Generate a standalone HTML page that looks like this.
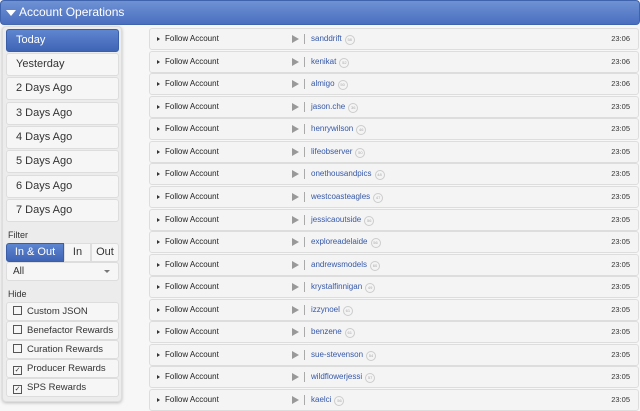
<!DOCTYPE html><html><head><style>
body{margin:0;width:640px;height:405px;overflow:hidden;background:#f7f7f7;font-family:"Liberation Sans",sans-serif;position:relative}
.hd{position:absolute;left:0;top:0;width:638px;height:23px;background:linear-gradient(#6f92d4,#4a6fbf);border:1px solid #3f63ad;border-radius:4px;color:#fff;font-size:12px;line-height:23px}
.hd span{margin-left:18px}
.hd i{position:absolute;left:5px;top:9px;border-left:5px solid transparent;border-right:5px solid transparent;border-top:6px solid #fff}
.lp{position:absolute;left:2px;top:26px;width:118px;height:374px;background:#ececec;border:1px solid #ddd;border-radius:4px;box-shadow:0 1px 3px #bbb}
.b{position:absolute;left:3px;width:111px;height:21px;background:#f6f6f6;border:1px solid #ddd;border-radius:3px;font-size:11px;line-height:21px;color:#333;box-sizing:content-box;text-indent:9px;white-space:nowrap;overflow:hidden}
.b.a{background:linear-gradient(#5f86d0,#3f64b5);border-color:#3a5fa8;color:#fff}
.lb{position:absolute;left:5px;font-size:9px;color:#333}
.c{text-indent:0;padding-left:0;font-size:9.5px}
.c u{display:inline-block;width:7px;height:7px;border:1px solid #555;margin:0 5px 0 6px;vertical-align:-1px;text-decoration:none;font-size:7px;line-height:7px;text-align:center}
.r{position:absolute;left:149px;width:488px;height:20px;background:#f4f4f4;border:1px solid #ddd;border-radius:3px;font-size:8px;color:#222;line-height:20px}
.r .t{position:absolute;left:7px;top:8px;border-top:2.5px solid transparent;border-bottom:2.5px solid transparent;border-left:3px solid #333}
.r .f{position:absolute;left:15px}
.r .p{position:absolute;left:142px;top:6px;border-top:4px solid transparent;border-bottom:4px solid transparent;border-left:7px solid #999}
.r .s{position:absolute;left:154px;top:5px;width:1px;height:10px;background:#aaa}
.r .n{position:absolute;left:161px;color:#3558a8}
.r .n em{font-style:normal;display:inline-block;width:8px;height:8px;border:1px solid #ccc;border-radius:50%;font-size:4px;line-height:8px;text-align:center;color:#aaa;margin-left:3px;vertical-align:0}
.r .tm{position:absolute;right:8px;font-size:7.5px;color:#333}
</style></head><body>
<div class="hd"><i></i><span>Account Operations</span></div>
<div class="lp">
<div class="b a" style="top:2px">Today</div>
<div class="b" style="top:26px">Yesterday</div>
<div class="b" style="top:50px">2 Days Ago</div>
<div class="b" style="top:75px">3 Days Ago</div>
<div class="b" style="top:99px">4 Days Ago</div>
<div class="b" style="top:123px">5 Days Ago</div>
<div class="b" style="top:148px">6 Days Ago</div>
<div class="b" style="top:172px">7 Days Ago</div>
<div class="lb" style="top:203px">Filter</div>
<div class="b a" style="top:216px;width:56px;height:17px;line-height:17px;text-indent:0;text-align:center;border-radius:3px 0 0 3px">In &amp; Out</div>
<div class="b" style="top:216px;left:61px;width:25px;height:17px;line-height:17px;text-indent:0;text-align:center;border-radius:0">In</div>
<div class="b" style="top:216px;left:88px;width:26px;height:17px;line-height:17px;text-indent:0;text-align:center;border-radius:0 3px 3px 0">Out</div>
<div class="b" style="top:235px;height:17px;line-height:17px;text-indent:6px;font-size:10px">All<span style="position:absolute;right:8px;top:7px;border-left:3px solid transparent;border-right:3px solid transparent;border-top:3px solid #777"></span></div>
<div class="lb" style="top:262px">Hide</div>
<div class="b c" style="top:275px;height:17px;line-height:17px"><u></u>Custom JSON</div>
<div class="b c" style="top:294px;height:17px;line-height:17px"><u></u>Benefactor Rewards</div>
<div class="b c" style="top:313px;height:17px;line-height:17px"><u></u>Curation Rewards</div>
<div class="b c" style="top:332px;height:17px;line-height:17px"><u>✓</u>Producer Rewards</div>
<div class="b c" style="top:351px;height:17px;line-height:17px"><u>✓</u>SPS Rewards</div>
</div>
<div class="r" style="top:28px"><i class="t"></i><span class="f">Follow Account</span><i class="p"></i><i class="s"></i><span class="n">sanddrift<em>58</em></span><span class="tm">23:06</span></div>
<div class="r" style="top:51px"><i class="t"></i><span class="f">Follow Account</span><i class="p"></i><i class="s"></i><span class="n">kenikat<em>52</em></span><span class="tm">23:06</span></div>
<div class="r" style="top:73px"><i class="t"></i><span class="f">Follow Account</span><i class="p"></i><i class="s"></i><span class="n">almigo<em>50</em></span><span class="tm">23:06</span></div>
<div class="r" style="top:96px"><i class="t"></i><span class="f">Follow Account</span><i class="p"></i><i class="s"></i><span class="n">jason.che<em>36</em></span><span class="tm">23:05</span></div>
<div class="r" style="top:118px"><i class="t"></i><span class="f">Follow Account</span><i class="p"></i><i class="s"></i><span class="n">henrywilson<em>46</em></span><span class="tm">23:05</span></div>
<div class="r" style="top:141px"><i class="t"></i><span class="f">Follow Account</span><i class="p"></i><i class="s"></i><span class="n">lifeobserver<em>50</em></span><span class="tm">23:05</span></div>
<div class="r" style="top:163px"><i class="t"></i><span class="f">Follow Account</span><i class="p"></i><i class="s"></i><span class="n">onethousandpics<em>48</em></span><span class="tm">23:05</span></div>
<div class="r" style="top:186px"><i class="t"></i><span class="f">Follow Account</span><i class="p"></i><i class="s"></i><span class="n">westcoasteagles<em>47</em></span><span class="tm">23:05</span></div>
<div class="r" style="top:209px"><i class="t"></i><span class="f">Follow Account</span><i class="p"></i><i class="s"></i><span class="n">jessicaoutside<em>56</em></span><span class="tm">23:05</span></div>
<div class="r" style="top:231px"><i class="t"></i><span class="f">Follow Account</span><i class="p"></i><i class="s"></i><span class="n">exploreadelaide<em>56</em></span><span class="tm">23:05</span></div>
<div class="r" style="top:254px"><i class="t"></i><span class="f">Follow Account</span><i class="p"></i><i class="s"></i><span class="n">andrewsmodels<em>60</em></span><span class="tm">23:05</span></div>
<div class="r" style="top:276px"><i class="t"></i><span class="f">Follow Account</span><i class="p"></i><i class="s"></i><span class="n">krystalfinnigan<em>49</em></span><span class="tm">23:05</span></div>
<div class="r" style="top:299px"><i class="t"></i><span class="f">Follow Account</span><i class="p"></i><i class="s"></i><span class="n">izzynoel<em>61</em></span><span class="tm">23:05</span></div>
<div class="r" style="top:321px"><i class="t"></i><span class="f">Follow Account</span><i class="p"></i><i class="s"></i><span class="n">benzene<em>61</em></span><span class="tm">23:05</span></div>
<div class="r" style="top:344px"><i class="t"></i><span class="f">Follow Account</span><i class="p"></i><i class="s"></i><span class="n">sue-stevenson<em>54</em></span><span class="tm">23:05</span></div>
<div class="r" style="top:366px"><i class="t"></i><span class="f">Follow Account</span><i class="p"></i><i class="s"></i><span class="n">wildflowerjessi<em>57</em></span><span class="tm">23:05</span></div>
<div class="r" style="top:389px"><i class="t"></i><span class="f">Follow Account</span><i class="p"></i><i class="s"></i><span class="n">kaelci<em>56</em></span><span class="tm">23:05</span></div>
</body></html>
